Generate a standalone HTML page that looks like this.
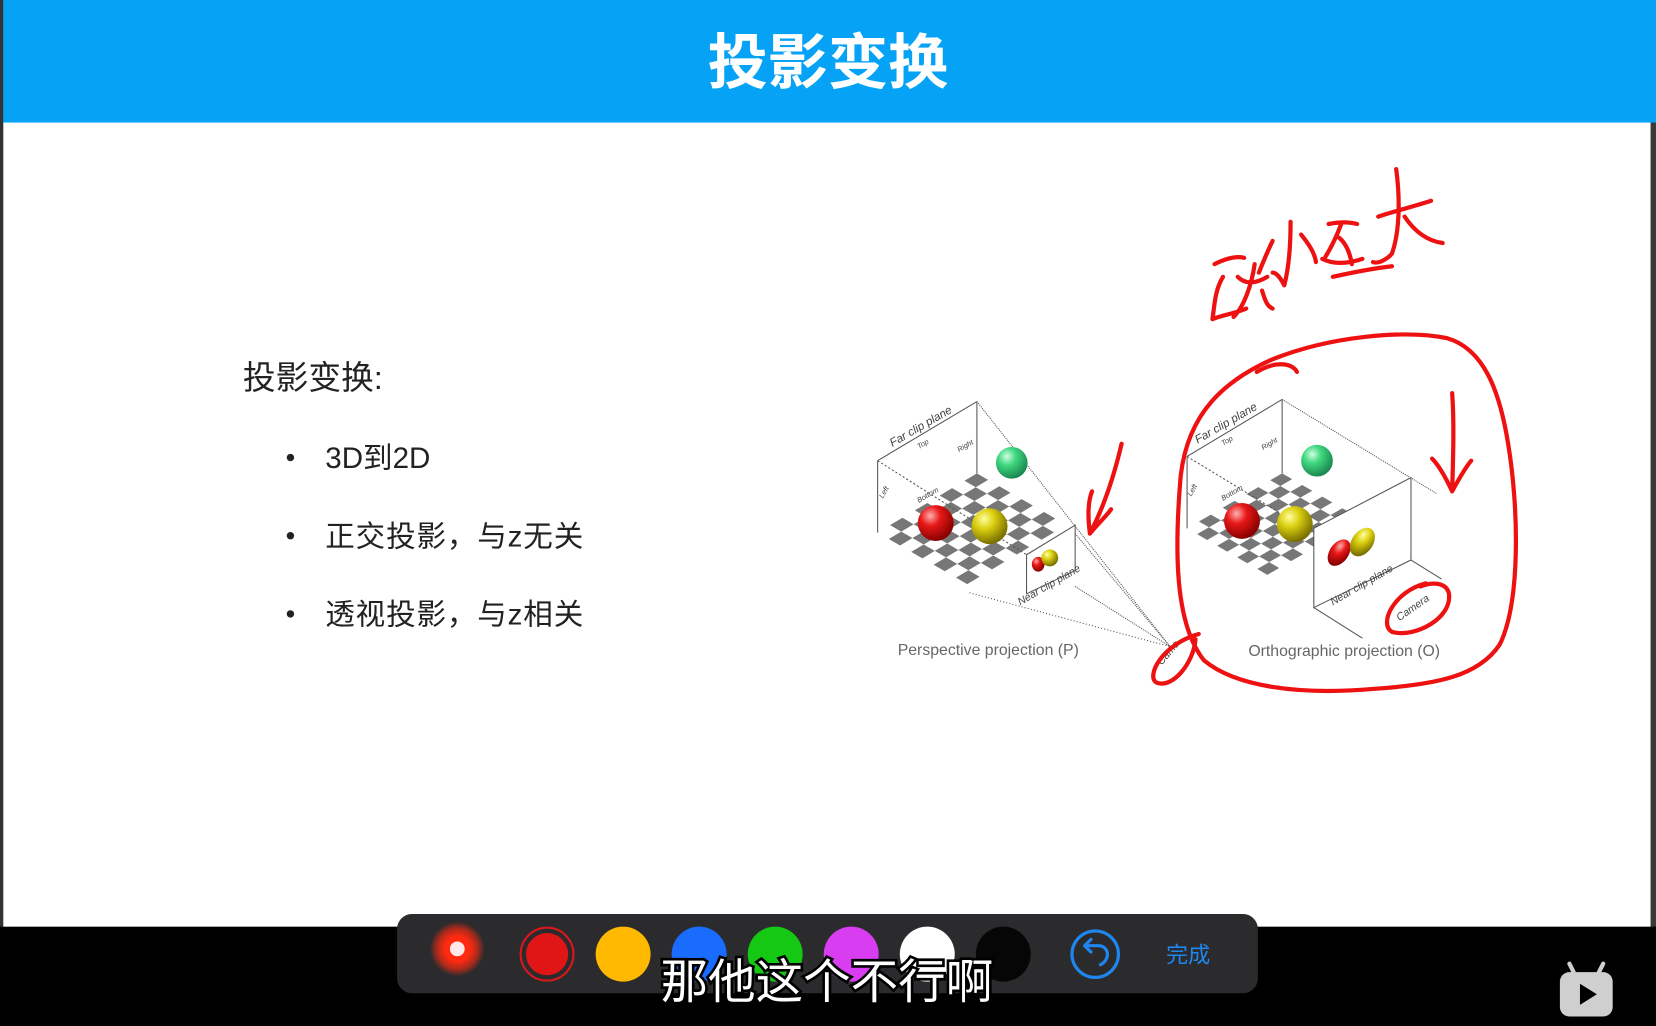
<!DOCTYPE html>
<html><head><meta charset="utf-8"><style>
html,body{margin:0;padding:0;width:1656px;height:1026px;overflow:hidden;background:#000}
svg{display:block}
</style></head><body>
<svg width="1656" height="1026" viewBox="0 0 1568 971" preserveAspectRatio="none" xmlns="http://www.w3.org/2000/svg" font-family="Liberation Sans, Noto Sans CJK SC, sans-serif">
<defs>
<radialGradient id="gr" cx="35%" cy="30%" r="70%"><stop offset="0" stop-color="#ffb0b0"/><stop offset="0.4" stop-color="#e81818"/><stop offset="1" stop-color="#8a0000"/></radialGradient>
<radialGradient id="gy" cx="35%" cy="30%" r="70%"><stop offset="0" stop-color="#ffffa0"/><stop offset="0.4" stop-color="#dcd010"/><stop offset="1" stop-color="#7a7000"/></radialGradient>
<radialGradient id="gg" cx="35%" cy="30%" r="70%"><stop offset="0" stop-color="#d0ffe0"/><stop offset="0.4" stop-color="#40d880"/><stop offset="1" stop-color="#1a8a50"/></radialGradient>
<radialGradient id="glow" cx="50%" cy="50%" r="50%"><stop offset="0.45" stop-color="#ff2a10"/><stop offset="0.75" stop-color="#ff2a10" stop-opacity="0.6"/><stop offset="1" stop-color="#ff2a10" stop-opacity="0"/></radialGradient>
<g id="board">
<rect width="8" height="8" fill="#fff"/>
<path fill="#777" d="M0 0h1v1h-1zM2 0h1v1h-1zM4 0h1v1h-1zM6 0h1v1h-1zM1 1h1v1h-1zM3 1h1v1h-1zM5 1h1v1h-1zM7 1h1v1h-1zM0 2h1v1h-1zM2 2h1v1h-1zM4 2h1v1h-1zM6 2h1v1h-1zM1 3h1v1h-1zM3 3h1v1h-1zM5 3h1v1h-1zM7 3h1v1h-1zM0 4h1v1h-1zM2 4h1v1h-1zM4 4h1v1h-1zM6 4h1v1h-1zM1 5h1v1h-1zM3 5h1v1h-1zM5 5h1v1h-1zM7 5h1v1h-1zM0 6h1v1h-1zM2 6h1v1h-1zM4 6h1v1h-1zM6 6h1v1h-1zM1 7h1v1h-1zM3 7h1v1h-1zM5 7h1v1h-1zM7 7h1v1h-1z"/>
</g>
</defs>
<rect width="1568" height="971" fill="#000"/>
<rect x="3" y="0" width="1560" height="877" fill="#fff"/>
<rect x="1563" y="0" width="5" height="877" fill="#3a3a3a"/>
<rect x="0" y="0" width="1568" height="116" fill="#05a2f5"/>
<rect x="0" y="0" width="3" height="877" fill="#333"/>
<text x="784" y="79" text-anchor="middle" font-size="57" font-weight="bold" fill="#fff">投影变换</text>

<text x="230" y="368" font-size="31" fill="#222">投影变换:</text>
<g font-size="28" fill="#222">
<circle cx="275" cy="433" r="3.5"/><text x="308" y="443">3D到2D</text>
<circle cx="275" cy="507" r="3.5"/><text x="308" y="517" letter-spacing="0.8">正交投影，与z无关</text>
<circle cx="275" cy="581" r="3.5"/><text x="308" y="591" letter-spacing="0.8">透视投影，与z相关</text>
</g>

<!-- Perspective diagram -->
<use href="#board" transform="matrix(10.6,6.1,-11.75,7,925,448)"/>
<g stroke="#555" stroke-width="1" fill="none">
<line x1="831" y1="436" x2="925" y2="380"/><line x1="831" y1="436" x2="831" y2="504"/><line x1="925" y1="380" x2="925" y2="448"/>
<line x1="831" y1="436" x2="972" y2="525" stroke-dasharray="2,2"/>
<line x1="925" y1="380" x2="1108" y2="612" stroke-dasharray="1,1"/>
<line x1="918" y1="561" x2="1108" y2="612" stroke-dasharray="1,2"/>
<line x1="1018" y1="505" x2="1108" y2="612" stroke-dasharray="1,1"/>
<line x1="1018" y1="555" x2="1108" y2="612" stroke-dasharray="1,1"/>
<polygon points="972,525 1018,497 1018,540 972,562" fill="#fff"/>
</g>
<circle cx="958" cy="438" r="15" fill="url(#gg)"/>
<circle cx="886" cy="495" r="17" fill="url(#gr)"/>
<circle cx="937" cy="498" r="17" fill="url(#gy)"/>
<ellipse cx="983" cy="534" rx="6" ry="7" fill="url(#gr)"/>
<ellipse cx="994" cy="528" rx="8" ry="8" fill="url(#gy)"/>
<g font-style="italic" fill="#444">
<text transform="translate(845,423) rotate(-30)" font-size="11">Far clip plane</text>
<text transform="translate(870,425) rotate(-30)" font-size="7">Top</text>
<text transform="translate(908,428) rotate(-30)" font-size="7">Right</text>
<text transform="translate(836,472) rotate(-60)" font-size="7">Left</text>
<text transform="translate(870,476) rotate(-30)" font-size="7">Bottom</text>
<text transform="translate(966,573) rotate(-30)" font-size="10">Near clip plane</text>
</g>
<text x="850" y="620" font-size="15" fill="#666">Perspective projection (P)</text>

<!-- Orthographic diagram -->
<use href="#board" transform="matrix(9.5,5.5,-11.25,6.5,1214,448)"/>
<g stroke="#555" stroke-width="1" fill="none">
<line x1="1124" y1="432" x2="1214" y2="378"/><line x1="1124" y1="432" x2="1124" y2="500"/><line x1="1214" y1="378" x2="1214" y2="448"/>
<line x1="1214" y1="378" x2="1360" y2="467" stroke-dasharray="1,1"/>
<line x1="1124" y1="432" x2="1244" y2="505" stroke-dasharray="2,2"/>
<polygon points="1244,500 1336,452 1336,530 1244,575" fill="#fff"/>
<line x1="1336" y1="530" x2="1365" y2="548"/>
<line x1="1244" y1="575" x2="1290" y2="604"/>
</g>
<circle cx="1247" cy="436" r="15" fill="url(#gg)"/>
<circle cx="1176" cy="493" r="17" fill="url(#gr)"/>
<circle cx="1226" cy="496" r="17" fill="url(#gy)"/>
<ellipse cx="1268" cy="523" rx="9" ry="14" transform="rotate(35 1268 523)" fill="url(#gr)"/>
<ellipse cx="1290" cy="513" rx="10" ry="15" transform="rotate(35 1290 513)" fill="url(#gy)"/>
<g font-style="italic" fill="#444">
<text transform="translate(1134,420) rotate(-30)" font-size="11">Far clip plane</text>
<text transform="translate(1158,422) rotate(-30)" font-size="7">Top</text>
<text transform="translate(1196,426) rotate(-30)" font-size="7">Right</text>
<text transform="translate(1128,470) rotate(-60)" font-size="7">Left</text>
<text transform="translate(1158,474) rotate(-30)" font-size="7">Bottom</text>
<text transform="translate(1262,573) rotate(-30)" font-size="10">Near clip plane</text>
<text transform="translate(1325,588) rotate(-35)" font-size="10">Camera</text>
<text transform="translate(1100,630) rotate(-50)" font-size="10">Came</text>
</g>
<text x="1182" y="621" font-size="15" fill="#666">Orthographic projection (O)</text>

<!-- red annotations -->
<g stroke="#e11" stroke-width="4" fill="none" stroke-linecap="round" stroke-linejoin="round">
<path d="M1062,420 C1055,450 1045,480 1032,505 M1032,505 C1030,490 1030,475 1034,465 M1032,505 C1040,495 1048,488 1052,482"/>
<path d="M1375,372 C1377,400 1376,430 1375,465 M1375,465 C1368,450 1362,440 1356,434 M1375,465 C1382,452 1388,442 1393,436"/>
<path d="M1190,352 C1210,340 1225,345 1228,352 M1205,340 C1160,360 1125,390 1118,450 C1112,520 1112,590 1140,625 C1170,650 1230,658 1300,652 C1360,648 1400,640 1420,610 C1440,570 1438,480 1428,420 C1420,370 1405,330 1370,320 C1330,312 1260,318 1205,340"/>
<path d="M1135,600 C1100,610 1085,640 1095,646 C1110,652 1130,628 1132,605"/>
<path d="M1350,552 C1320,560 1305,590 1318,598 C1340,604 1375,585 1372,562 C1370,552 1358,550 1345,555"/>
<path d="M1150,250 C1160,245 1170,242 1178,244 M1158,262 C1150,275 1150,290 1148,302 C1158,298 1172,296 1180,292 M1172,262 C1180,270 1190,268 1200,262 M1188,250 C1185,270 1178,290 1168,300 M1195,275 C1198,285 1200,290 1205,292"/>
<path d="M1222,210 C1222,235 1220,255 1216,270 C1212,262 1208,258 1205,258 M1205,228 C1200,238 1196,248 1192,258 M1232,222 C1240,232 1245,240 1246,248"/>
<path d="M1258,212 C1268,210 1278,210 1285,212 M1270,212 C1265,225 1260,235 1255,243 M1268,225 C1274,230 1278,238 1280,250 M1252,245 C1262,250 1275,250 1290,245 M1262,262 C1280,258 1300,254 1318,252"/>
<path d="M1305,205 C1320,200 1340,195 1355,190 M1322,160 C1326,190 1325,220 1318,240 C1314,245 1305,250 1300,248 M1330,205 C1340,220 1352,228 1366,230"/>
</g>

<!-- toolbar -->
<rect x="376" y="865" width="815" height="75" rx="14" fill="#2b2b2d"/>
<circle cx="433" cy="898" r="26" fill="url(#glow)"/>
<circle cx="433" cy="898" r="7" fill="#ffe8e8"/>
<circle cx="518" cy="903" r="25" fill="none" stroke="#d8181c" stroke-width="2"/>
<circle cx="518" cy="903" r="20" fill="#e01616"/>
<circle cx="590" cy="903" r="26" fill="#ffb900"/>
<circle cx="662" cy="903" r="26" fill="#1a6cff"/>
<circle cx="734" cy="903" r="26" fill="#14c814"/>
<circle cx="806" cy="903" r="26" fill="#d83df2"/>
<circle cx="878" cy="903" r="26" fill="#ffffff"/>
<circle cx="950" cy="903" r="26" fill="#060606"/>
<circle cx="1037" cy="903" r="22" fill="none" stroke="#1e86ee" stroke-width="3"/>
<path d="M1042,913 C1052,908 1050,895 1040,895 L1028,895 M1033,889 L1027,895 L1033,901" fill="none" stroke="#1e86ee" stroke-width="3" stroke-linecap="round" stroke-linejoin="round"/>
<text x="1125" y="911" text-anchor="middle" font-size="21" fill="#1e86ee">完成</text>

<text x="783" y="945" text-anchor="middle" font-size="45" fill="#fff" stroke="#000" stroke-width="5" paint-order="stroke">那他这个不行啊</text>

<rect x="1477" y="920" width="50" height="42" rx="9" fill="#cfcfcf"/>
<line x1="1490" y1="920" x2="1486" y2="912" stroke="#cfcfcf" stroke-width="4" stroke-linecap="round"/>
<line x1="1514" y1="920" x2="1518" y2="912" stroke="#cfcfcf" stroke-width="4" stroke-linecap="round"/>
<path d="M1496,931 L1512,941 L1496,951 Z" fill="#000"/>
</svg>
</body></html>
